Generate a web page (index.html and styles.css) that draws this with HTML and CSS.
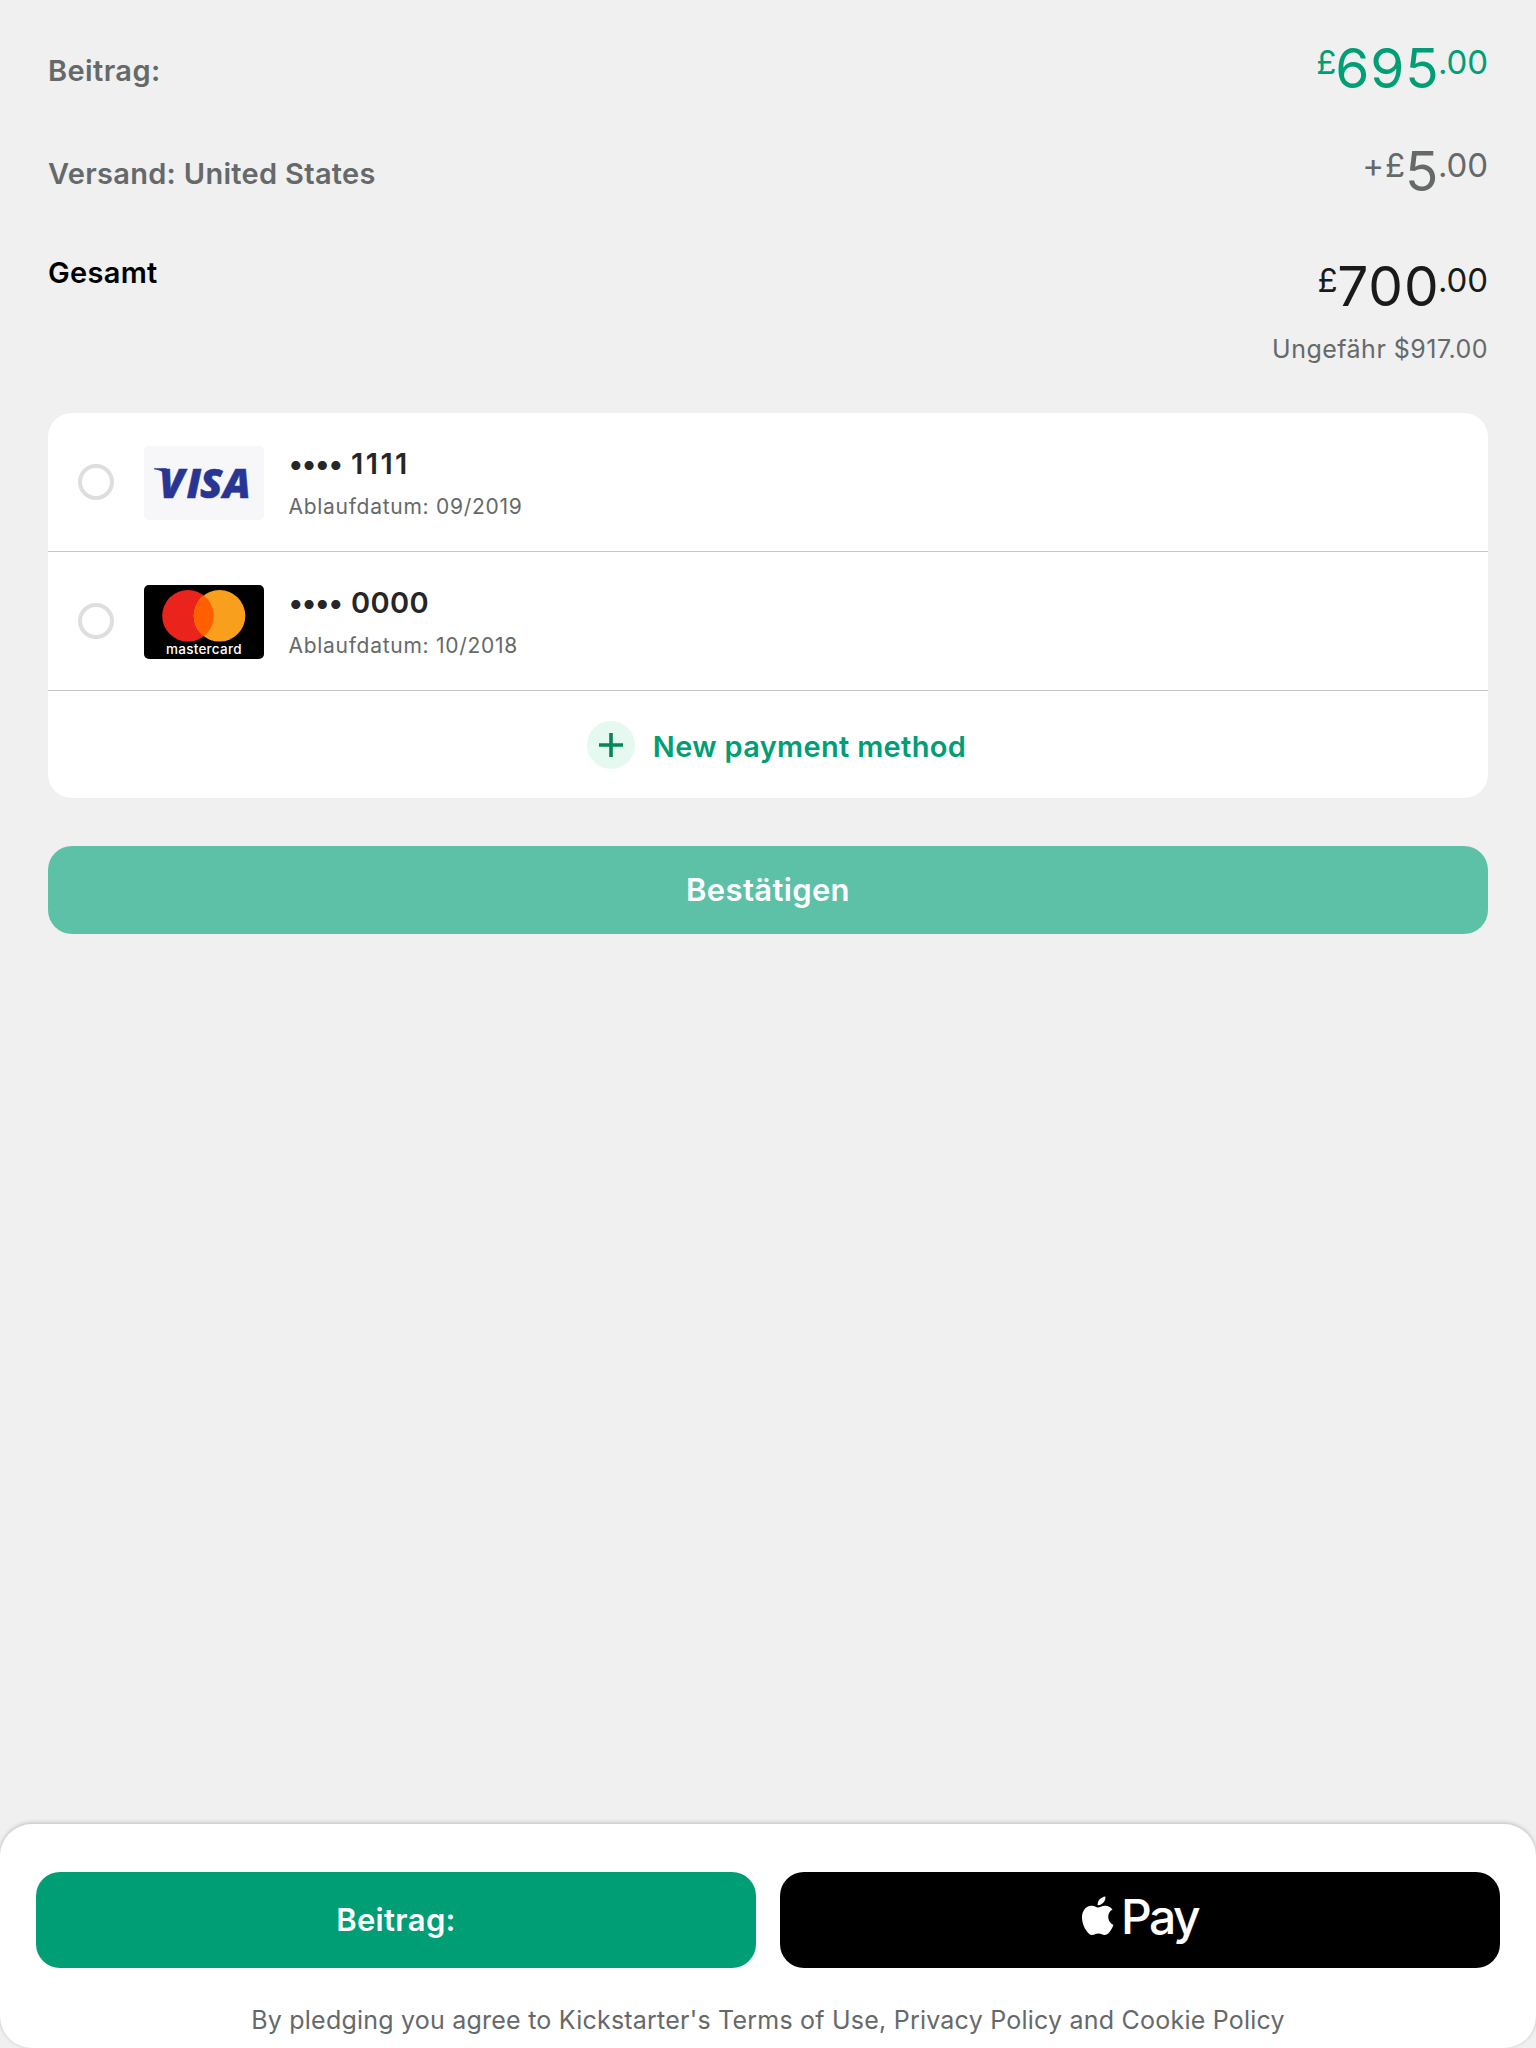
FILE: index.html
```
<!DOCTYPE html>
<html lang="de">
<head>
<meta charset="utf-8">
<title>Beitrag</title>
<link rel="stylesheet" href="styles.css">
</head>
<body>
<div class="screen">
  <main class="content">
    <section class="summary">
      <div class="line">
        <span class="label label-pledge">Beitrag:</span>
        <span class="price price-green"><span class="minor">£</span><span class="major">695</span><span class="minor">.00</span></span>
      </div>
      <div class="line">
        <span class="label">Versand: United States</span>
        <span class="price price-gray"><span class="minor plus">+£</span><span class="major single">5</span><span class="minor">.00</span></span>
      </div>
      <div class="line total">
        <span class="label">Gesamt</span>
        <span class="total-value">
          <span class="price"><span class="minor currency">£</span><span class="major">700</span><span class="minor">.00</span></span>
          <span class="approx">Ungefähr $917.00</span>
        </span>
      </div>
    </section>

    <section class="methods">
      <div class="method">
        <span class="radio"></span>
        <svg class="card" viewBox="0 0 120 74" width="120" height="74">
          <rect width="120" height="74" rx="5" fill="#f7f7fa"/>
          <path d="M10 22.2H22.5L26 34C23 27.5 18 24.4 10 23.2Z" fill="#283593"/>
          <text class="visa" y="51.5"><tspan x="15">V</tspan><tspan x="42.6">I</tspan><tspan x="56">S</tspan><tspan x="79">A</tspan></text>
        </svg>
        <div class="details">
          <div class="number"><span class="dots">••••</span><span class="digits ones">1111</span></div>
          <div class="expiry">Ablaufdatum: 09/2019</div>
        </div>
      </div>
      <div class="method">
        <span class="radio"></span>
        <svg class="card" viewBox="0 0 120 74" width="120" height="74">
          <rect width="120" height="74" rx="5" fill="#000"/>
          <circle cx="44" cy="30.8" r="25.8" fill="#eb231d"/>
          <circle cx="75.5" cy="30.8" r="25.8" fill="#f89f1d"/>
          <path d="M59.75 10.4A25.8 25.8 0 0 1 59.75 51.2A25.8 25.8 0 0 1 59.75 10.4Z" fill="#ff5f00"/>
          <text class="mastercard" x="22" y="69" textLength="75.5" lengthAdjust="spacing">mastercard</text>
        </svg>
        <div class="details">
          <div class="number"><span class="dots">••••</span><span class="digits">0000</span></div>
          <div class="expiry">Ablaufdatum: 10/2018</div>
        </div>
      </div>
      <div class="add">
        <svg viewBox="0 0 48 48" width="48" height="48">
          <circle cx="24" cy="24" r="24" fill="#e5f9f1"/>
          <path d="M24 12V36M12 24H36" stroke="#028858" stroke-width="3.6" fill="none"/>
        </svg>
        <span class="add-text">New payment method</span>
      </div>
    </section>

    <button class="confirm">Bestätigen</button>
  </main>

  <footer class="footer">
    <div class="actions">
      <button class="pledge">Beitrag:</button>
      <button class="apple-pay" aria-label="Apple Pay">
        <svg class="apple" viewBox="0 0 32 40" width="32" height="40">
          <path transform="translate(-3.6 .4) scale(1.61)" fill="#fff" d="M12.152 6.896c-.948 0-2.415-1.078-3.96-1.04-2.04.027-3.91 1.183-4.961 3.014-2.117 3.675-.546 9.103 1.519 12.09 1.013 1.454 2.208 3.09 3.792 3.039 1.52-.065 2.09-.987 3.935-.987 1.831 0 2.35.987 3.96.948 1.637-.026 2.676-1.48 3.676-2.948 1.156-1.688 1.636-3.325 1.662-3.415-.039-.013-3.182-1.221-3.22-4.857-.026-3.04 2.48-4.494 2.597-4.559-1.429-2.09-3.623-2.324-4.39-2.376-2-.156-3.675 1.09-4.61 1.09zM15.53 3.83c.843-1.012 1.4-2.427 1.245-3.83-1.207.052-2.662.805-3.532 1.818-.78.896-1.454 2.338-1.273 3.714 1.338.104 2.715-.688 3.559-1.701"/>
        </svg>
        <span class="pay">Pay</span>
      </button>
    </div>
    <p class="legal">By pledging you agree to Kickstarter's Terms of Use, Privacy Policy and Cookie Policy</p>
  </footer>
</div>
</body>
</html>
```
FILE: styles.css
```
* { box-sizing: border-box; }
body { margin: 0; background: #f0f0f0; color: #000; font-family: Inter, "Liberation Sans", sans-serif; }
button { border: 0; padding: 0; font: inherit; }

.screen { width: 1536px; height: 2048px; display: flex; flex-direction: column; overflow: hidden; }
.content { flex: 1; padding: 37px 48px 0; }

/* amounts */
.summary { height: 376px; }
.line { display: flex; justify-content: space-between; align-items: flex-start; height: 103px; color: #656969; }
.label { padding-top: 15.5px; font-size: 29px; font-weight: 600; line-height: 36px; letter-spacing: .3px; }
.label-pledge { letter-spacing: .4px; }
.price { display: flex; justify-content: flex-end; align-items: flex-start; height: 64px; }
.price-green { color: #009e74; }
.major { font-size: 55px; line-height: 63px; letter-spacing: .9px; margin: 0 -1.6px 0 -1px; }
.major.single { letter-spacing: 0; margin: 0 -.4px 0 -1.3px; }
.minor { font-size: 33px; line-height: 51px; letter-spacing: -.1px; }
.minor.plus { letter-spacing: 1px; }
.minor.currency { margin-right: .6px; }
.total { height: auto; padding-top: 11px; color: #000; }
.total .label { padding-top: .6px; }
.total-value { display: flex; flex-direction: column; align-items: flex-end; gap: 14px; padding-top: 1px; }
.total .price { color: #1a1a1a; }
.approx { color: #656969; font-size: 25px; line-height: 32px; letter-spacing: .48px; }

/* saved cards */
.methods { height: 385px; background: #fff; border-radius: 24px; }
.method { display: flex; align-items: center; height: 139px; padding-left: 30px; border-bottom: 1px solid #c3c5c5; }
.radio { width: 36px; height: 36px; border: 4px solid #dcdfde; border-radius: 50%; }
.card { margin: 1px 24.5px 0 30px; }
.details { padding-top: 2px; }
.number { display: flex; font-size: 29px; line-height: 36px; font-weight: 600; color: #262626; }
.dots { letter-spacing: -1.3px; margin-right: 9.4px; }
.digits { letter-spacing: .37px; }
.ones { letter-spacing: 2.4px; }
.expiry { margin-top: 11px; font-size: 21px; line-height: 28px; letter-spacing: .72px; color: #656969; }
.visa { font: italic 800 41px "Open Sans", sans-serif; fill: #283593; stroke: #283593; stroke-width: .5px; }
.mastercard { font: 500 13.5px Inter, sans-serif; fill: #fff; }
.add { display: flex; align-items: center; justify-content: center; gap: 18px; height: 108px; padding-left: 17px; }
.add-text { padding-top: 3px; font-size: 29px; font-weight: 600; line-height: 36px; letter-spacing: .32px; color: #009e74; }

.confirm { display: block; width: 100%; height: 88px; margin-top: 48px; padding-bottom: 2px; border-radius: 24px; background: #5dc1a8; color: #fff; font-size: 31px; font-weight: 600; letter-spacing: .34px; }

/* bottom bar */
.footer { height: 224px; padding: 48px 36px 0; background: #fff; border-radius: 32px; box-shadow: 0 -1px 4px rgba(0, 0, 0, .22); }
.actions { display: grid; grid-template-columns: 1fr 1fr; gap: 24px; height: 96px; }
.actions button { border-radius: 24px; color: #fff; }
.actions .pledge { padding-bottom: 2px; background: #009e74; font-size: 31px; font-weight: 600; letter-spacing: .35px; }
.apple-pay { display: flex; align-items: center; justify-content: center; gap: 7px; background: #000; }
.apple { margin-bottom: 9px; }
.pay { margin-bottom: 7px; font-size: 48px; font-weight: 500; line-height: 64px; letter-spacing: -2.6px; }
.legal { margin: 36px 0 0; text-align: center; font-size: 25px; line-height: 32px; letter-spacing: .22px; color: #656969; }
```
